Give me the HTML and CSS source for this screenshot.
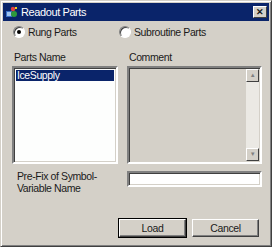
FILE: index.html
```html
<!DOCTYPE html>
<html>
<head>
    <meta charset='utf-8'>
    <title>Readout Parts</title>
    <link rel="stylesheet" href="styles.css">
</head>
<body>
    <div class="janela">
        <div class="titulo">
            <svg class="icone" width="13" height="13" viewBox="0 0 13 13">
                <rect x="1" y="5" width="6" height="6" fill="#3a70c8"/>
                <rect x="2" y="6" width="4" height="4" fill="#9fc3f0"/>
                <circle cx="9" cy="8" r="3" fill="#2e9a3c"/>
                <circle cx="8" cy="3" r="2.2" fill="#e04040"/>
                <rect x="10" y="1" width="2" height="2" fill="#f0d020"/>
            </svg>
            <span class="tituloTexto">Readout Parts</span>
            <span class="fechar">&#10005;</span>
        </div>
        <div class="conteudo">
            <div class="radios">
                <label class="radio primeiro"><span class="bolinha marcada"></span>Rung Parts</label>
                <label class="radio"><span class="bolinha"></span>Subroutine Parts</label>
            </div>
            <div class="grade">
                <div class="rotulo">Parts Name</div>
                <div class="rotulo">Comment</div>
                <div class="lista">
                    <div class="item selecionado">IceSupply</div>
                </div>
                <div class="comentario">
                    <div class="rolagem">
                        <span class="seta">&#9650;</span>
                        <span class="trilho"></span>
                        <span class="seta">&#9660;</span>
                    </div>
                </div>
                <div class="prefixo">Pre-Fix of Symbol-<br>Variable Name</div>
                <div class="campo"></div>
            </div>
            <div class="botoes">
                <button class="botao padrao">Load</button>
                <button class="botao">Cancel</button>
            </div>
        </div>
    </div>
</body>
</html>
```

FILE: styles.css
```css
body {
    margin: 0;
    background-color: #d4d0c8;
}
.janela {
    width: 272px;
    height: 247px;
    box-sizing: border-box;
    background-color: #d4d0c8;
    border: 1px solid;
    border-color: #d4d0c8 #404040 #404040 #d4d0c8;
    box-shadow: inset 1px 1px #ffffff, inset -1px -1px #808080;
    padding: 2px;
    font-family: "Liberation Sans", Arial, sans-serif;
    font-size: 10.5px;
    letter-spacing: -0.4px;
    color: #1a1a1a;
    display: flex;
    flex-direction: column;
}
.titulo {
    height: 18px;
    background-color: #0a246a;
    display: flex;
    align-items: center;
    padding: 0 2px 0 2px;
}
.icone {
    margin-right: 3px;
}
.tituloTexto {
    color: white;
    font-size: 11px;
    flex: 1;
}
.fechar {
    width: 14px;
    height: 12px;
    box-sizing: border-box;
    background-color: #d4d0c8;
    border: 1px solid;
    border-color: #ffffff #404040 #404040 #ffffff;
    font-size: 9px;
    font-weight: bold;
    line-height: 10px;
    text-align: center;
    letter-spacing: 0;
}
.conteudo {
    flex: 1;
    padding: 0 7px 0 9px;
    display: flex;
    flex-direction: column;
}
.radios {
    display: flex;
    margin-top: 5px;
    height: 12px;
    align-items: center;
}
.radio {
    display: flex;
    align-items: center;
    gap: 3px;
}
.primeiro {
    width: 106px;
    padding-left: 1px;
}
.bolinha {
    width: 12px;
    height: 12px;
    box-sizing: border-box;
    border-radius: 50%;
    background-color: white;
    border: 1px solid;
    border-color: #808080 #ffffff #ffffff #808080;
    box-shadow: inset 1px 1px #404040;
    display: flex;
    align-items: center;
    justify-content: center;
}
.marcada::after {
    content: "";
    width: 4px;
    height: 4px;
    border-radius: 50%;
    background-color: black;
}
.grade {
    display: grid;
    grid-template-columns: 106px 135px;
    column-gap: 9px;
    margin-top: 13px;
}
.rotulo {
    padding-left: 2px;
    height: 15px;
}
.lista {
    height: 98px;
    box-sizing: border-box;
    background-color: #fdfefd;
    border: 2px solid;
    border-color: #808080 #ffffff #ffffff #808080;
    box-shadow: inset 1px 1px #404040, inset -1px -1px #d4d0c8;
    padding: 2px 2px;
}
.item {
    height: 11px;
    line-height: 11px;
    padding-left: 1px;
}
.selecionado {
    background-color: #0a246a;
    color: white;
}
.comentario {
    height: 98px;
    box-sizing: border-box;
    background-color: #d4d0c8;
    border: 2px solid;
    border-color: #808080 #ffffff #ffffff #808080;
    box-shadow: inset 1px 1px #404040, inset -1px -1px #d4d0c8;
    display: flex;
    justify-content: flex-end;
    padding: 1px;
}
.rolagem {
    width: 13px;
    display: flex;
    flex-direction: column;
    background-color: #ebe9e4;
}
.trilho {
    flex: 1;
}
.seta {
    height: 13px;
    box-sizing: border-box;
    background-color: #d4d0c8;
    border: 1px solid;
    border-color: #ffffff #404040 #404040 #ffffff;
    color: #808080;
    font-size: 6px;
    line-height: 11px;
    text-align: center;
}
.prefixo {
    margin-top: 6px;
    padding-left: 5px;
    line-height: 12px;
}
.campo {
    margin-top: 7px;
    height: 16px;
    box-sizing: border-box;
    background-color: white;
    border: 2px solid;
    border-color: #808080 #ffffff #ffffff #808080;
    box-shadow: inset 1px 1px #404040, inset -1px -1px #d4d0c8;
}
.botoes {
    display: flex;
    justify-content: flex-end;
    gap: 6px;
    margin-top: auto;
    margin-bottom: 7px;
    padding-right: 3px;
}
.botao {
    width: 67px;
    height: 18px;
    box-sizing: border-box;
    background-color: #d4d0c8;
    border: 1px solid;
    border-color: #ffffff #404040 #404040 #ffffff;
    box-shadow: inset -1px -1px #808080;
    font-family: "Liberation Sans", Arial, sans-serif;
    font-size: 10.5px;
    letter-spacing: -0.4px;
    color: #1a1a1a;
    padding: 0;
}
.padrao {
    outline: 1px solid black;
}
```
